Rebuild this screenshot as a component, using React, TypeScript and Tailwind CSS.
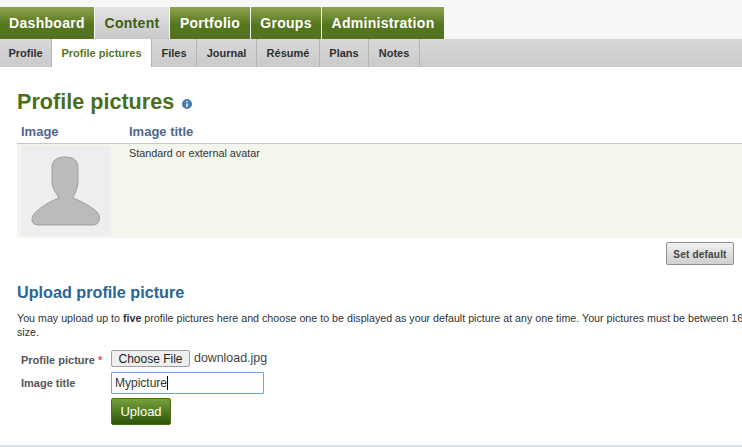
import { Info } from 'lucide-react'

const mainTabs = [
  { label: 'Dashboard', width: 'w-[94px]' },
  { label: 'Content', width: 'w-[74px]', active: true },
  { label: 'Portfolio', width: 'w-[80px]' },
  { label: 'Groups', width: 'w-[70px]' },
  { label: 'Administration', width: 'w-[122px]' },
]

const subTabs = [
  { label: 'Profile', width: 'w-[51px]' },
  { label: 'Profile pictures', width: 'w-[99px]', active: true },
  { label: 'Files', width: 'w-[44px]' },
  { label: 'Journal', width: 'w-[59px]' },
  { label: 'Résumé', width: 'w-[62px]' },
  { label: 'Plans', width: 'w-[48px]' },
  { label: 'Notes', width: 'w-[50px]' },
]

function Avatar() {
  return (
    <svg viewBox="0 0 90 90" className="h-[90px] w-[90px] bg-[#eeeeee]">
      <path
        d="M31 22 C31 14 36 11 44 11 C52 11 57 14 57 22 L57 36 C57 42 54 47 52 52 C60 55 71 61 76 66 C81 72 78 79 72 79 L17 79 C11 79 9 73 13 68 C19 61 30 55 38 52 C35 47 31 42 31 36 Z"
        fill="#bbbbbb"
        stroke="#8f8f8f"
        strokeWidth="0.8"
      />
    </svg>
  )
}

export default function App() {
  return (
    <div className="flex h-[447px] w-[742px] flex-col overflow-hidden bg-white font-['Liberation_Sans',Arial,sans-serif]">
      {/* Main navigation */}
      <div className="bg-[#f7f7f7] pt-[7px]">
        <nav className="flex h-8 gap-px">
          {mainTabs.map((tab) => (
            <div
              key={tab.label}
              className={
                tab.active
                  ? `${tab.width} flex items-center justify-center bg-gradient-to-b from-[#e4e4e4] to-[#c8c8c8] text-sm font-bold tracking-[0.3px] text-[#3d5f14]`
                  : `${tab.width} flex items-center justify-center bg-[linear-gradient(#8fa44e,#55761f_55%,#527220)] text-sm font-bold tracking-[0.3px] text-white`
              }
            >
              {tab.label}
            </div>
          ))}
        </nav>
      </div>

      {/* Sub navigation */}
      <nav className="flex h-7 gap-px bg-gradient-to-b from-[#d8d8d8] to-[#cacaca]">
        {subTabs.map((tab) => (
          <div
            key={tab.label}
            className={
              tab.active
                ? `${tab.width} flex items-center justify-center bg-white text-[11px] font-bold text-[#55761f] shadow-[1px_0_0_#b4b4b4]`
                : `${tab.width} flex items-center justify-center text-[11px] font-bold text-[#2f2f2f] shadow-[1px_0_0_#b4b4b4]`
            }
          >
            {tab.label}
          </div>
        ))}
      </nav>

      <main className="flex flex-1 flex-col pl-[17px]">
        <h1 className="mt-[22px] flex items-center gap-[6px] text-[21.6px] leading-[26px] font-bold text-[#4c6e1c]">
          Profile pictures
          <Info size={14} className="mt-[3px] fill-[#4b7bb0] text-white" strokeWidth={2.5} />
        </h1>

        {/* Pictures table */}
        <div className="mt-[7px] flex h-[22px] items-center border-b border-[#c8c8c8] pb-px text-xs font-bold text-[#50688c]">
          <span className="w-[112px] pl-1 text-[13px]">Image</span>
          <span className="text-[13px]">Image title</span>
        </div>
        <div className="flex h-[94px] bg-[#f2f6ec] pt-[2px] pl-1">
          <Avatar />
          <span className="mt-[1px] ml-[18px] text-[10.8px] leading-3 text-[#333333]">Standard or external avatar</span>
        </div>

        <div className="mt-[4px] flex justify-end pr-2">
          <button className="h-[23px] w-[68px] rounded-[2px] border border-[#8f8f8f] bg-gradient-to-b from-[#f0f0f0] to-[#cfcfcf] pt-px text-[10px] font-bold tracking-[0.2px] text-[#444444]">
            Set default
          </button>
        </div>

        {/* Upload form */}
        <h2 className="mt-[17px] text-[16.2px] leading-5 font-bold text-[#2b6496]">Upload profile picture</h2>
        <p className="mt-[9px] text-[10.7px] leading-[14px] whitespace-nowrap text-[#333333]">
          You may upload up to <b>five</b> profile pictures here and choose one to be displayed as your default picture at any one time. Your pictures must be between 16x16 and
          <br />
          size.
        </p>

        <div className="mt-[11px] flex h-[18px] items-center pl-1">
          <span className="w-[90px] pt-[3px] text-[11px] font-bold text-[#555555]">
            Profile picture <span className="text-[#d9534f]">*</span>
          </span>
          <button className="h-[17px] w-[79px] self-start rounded-[2px] border border-[#a0a0a0] bg-[#efefef] text-xs text-[#222222]">Choose File</button>
          <span className="ml-1 pb-[2px] text-[12.4px] text-[#444444]">download.jpg</span>
        </div>
        <div className="mt-[4px] flex h-[22px] items-center pl-1">
          <span className="w-[90px] text-[11px] font-bold text-[#555555]">Image title</span>
          <div className="flex h-[22px] w-[153px] items-center rounded-[1px] border border-[#6f9fe0] pr-1 pl-[3px] text-xs text-[#333333]">
            Mypicture
            <span className="h-[14px] w-px bg-black" />
          </div>
        </div>
        <div className="mt-[4px] pl-[94px]">
          <button className="h-[27px] w-[60px] rounded-[2px] border border-[#4c6e1c] bg-[linear-gradient(#74a23f,#2f5406)] text-[13px] text-white">Upload</button>
        </div>
      </main>

      <div className="h-[2px] bg-[#d5e0e8]" />
    </div>
  )
}
